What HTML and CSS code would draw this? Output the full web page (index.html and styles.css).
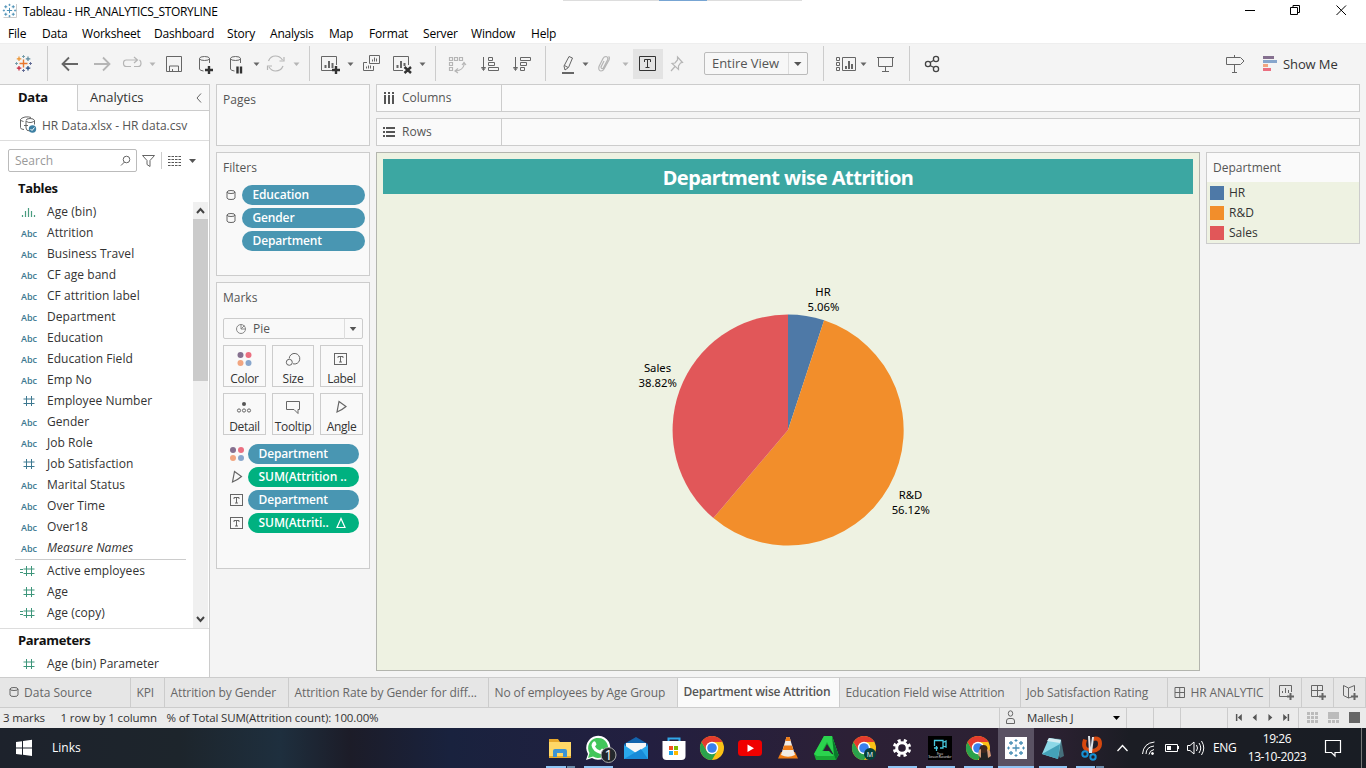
FILE: index.html
```html
<!DOCTYPE html>
<html lang="en">
<head>
<meta charset="utf-8">
<title>Tableau - HR_ANALYTICS_STORYLINE</title>
<link rel="stylesheet" href="styles.css">
</head>
<body>
<svg class="defs" width="0" height="0">
  <defs>
    <g id="plus-logo" fill="none">
      <path d="M0-4V4M-4 0H4" stroke="#e8762d" stroke-width="1.4"/>
      <path d="M-4.500-7v4.500M-6.700-4.700h4.500" stroke="#eb912c" stroke-width="1.200"/>
      <path d="M4.500-7v4.500M2.300-4.700h4.500" stroke="#59879b" stroke-width="1.200"/>
      <path d="M-4.500 2.500v4.500M-6.700 4.700h4.500" stroke="#c72037" stroke-width="1.200"/>
      <path d="M4.500 2.500v4.500M2.300 4.700h4.500" stroke="#1f457e" stroke-width="1.200"/>
      <path d="M0-8.500v3M-1.500-7h3M-8.500 0h3M-7-1.500v3" stroke="#7199a6" stroke-width=".9"/>
      <path d="M0 5.500v3M-1.500 7h3M5.500 0h3M7-1.500v3" stroke="#5b6591" stroke-width=".9"/>
    </g>
    <g id="plus-logo-blue" fill="none" stroke="#4a8fb5" stroke-width="1.300">
      <path d="M0-3.500V3.500M-3.500 0H3.500M-5-7v4M-7-5h4M5-7v4M3-5h4M-5 3v4M-7 5h4M5 3v4M3 5h4"/>
      <path d="M0-9v3M-1.500-7.500h3M-9 0h3M-7.500-1.500v3M0 6v3M-1.500 7.500h3M6 0h3M7.500-1.500v3" stroke-width="1"/>
    </g>
    <g id="chrome">
      <circle r="12" fill="#fbc116"/>
      <path d="M-10.400-6A12 12 0 0 0 0 12L5.200 3L-5.200 3Z" fill="#2ba24c"/>
      <path d="M0-6H10.400A12 12 0 0 0-10.400-6L-5.200 3Z" fill="#e33b2e"/>
      <circle r="6.200" fill="#fff"/><circle r="4.800" fill="#3a80ee"/>
    </g>
    <g id="dots">
      <circle cx="-4" cy="-4" r="3" fill="#85708f"/><circle cx="4" cy="-4" r="3" fill="#eb6f80"/>
      <circle cx="-4" cy="4" r="3" fill="#f1a580"/><circle cx="4" cy="4" r="3" fill="#88a6cc"/>
    </g>
    <g id="boxed-t" fill="none" stroke="#666">
      <rect x="-6" y="-5.500" width="12" height="11"/>
      <path d="M-2.500-1V-2.500H2.500V-1M0-2.500V3M-1.500 3H1.500"/>
    </g>
    <path id="angle" d="M-2.500-5.500L4.500-.5Q.5 3-4.500 5Z" fill="none" stroke="#666" stroke-width="1.200"/>
    <path id="db" d="M-4-3V3q0 1.500 4 1.500T4 3V-3Q4-4.500 0-4.500T-4-3Q-4-1.500 0-1.500T4-3" fill="none" stroke="#666"/>
    <path id="hash" d="M-2.500-5V5M2.500-5V5M-5.500-2H5.500M-5.500 2.500H5.500" fill="none" stroke="currentColor"/>
    <path id="caret" d="M-3-1.500H3L0 2Z"/>
  </defs>
</svg>

<div class="screen">
  <header class="titlebar">
    <svg width="22" height="22" viewBox="0 0 22 22"><path d="M3.500 17.500h13V4" fill="none" stroke="#ccc"/><use href="#plus-logo-blue" transform="translate(9.500 10.500) scale(.75)"/></svg>
    <span class="window-title">Tableau - HR_ANALYTICS_STORYLINE</span>
    <span class="top-strip"><i></i></span>
    <svg width="136" height="22" viewBox="1230 0 136 22" fill="none" stroke="#000"><path d="M1245 10.500h10M1290.500 14.500v-7h7v7zM1293 7V5.500h6.500v7H1298M1336.500 5.500l9.500 9.500M1346 5.500L1336.500 15"/></svg>
  </header>
  <nav class="menu">
    <span style="width:34px">File</span><span style="width:40px">Data</span><span style="width:72px">Worksheet</span><span style="width:73px">Dashboard</span><span style="width:43px">Story</span><span style="width:59px">Analysis</span><span style="width:40px">Map</span><span style="width:54px">Format</span><span style="width:48px">Server</span><span style="width:60px">Window</span><span>Help</span>
  </nav>

  <div class="toolbar">
    <svg width="47" height="41" viewBox="0 43 47 41"><use href="#plus-logo" x="23.500" y="63.500"/></svg><i class="sep"></i>
    <svg width="38" height="41" viewBox="48 43 38 41"><path d="M78 64H63M69 57.500L62.500 64l6.500 6.500" class="dark thick"/></svg>
    <svg width="30" height="41" viewBox="86 43 30 41"><path d="M94 64h15M103 57.500l6.500 6.500-6.500 6.500" class="light thick"/></svg>
    <svg width="30" height="41" viewBox="116 43 30 41"><path d="M131 66.500h-4.500q-3 0-3-3.300t3-3.200h10.500M134 57l3.500 3-3.500 3M139.500 60q1.500 1 1.500 3.200 0 3.300-3 3.300h-4" class="light"/></svg>
    <svg width="14" height="41" viewBox="146 43 14 41"><use href="#caret" x="152.500" y="64" fill="#b5b5b5"/></svg>
    <svg width="30" height="41" viewBox="160 43 30 41" class="dark"><path d="M166.500 56.500h15v15h-15zM169.500 71v-5h9v5M172.500 71v-2"/></svg>
    <svg width="30" height="41" viewBox="190 43 30 41" class="dark"><path d="M209.500 63v-4.500q0-2-5-2t-5 2V69q0 1.500 4 2M199.500 58.500q0 2 5 2t5-2"/><path d="M209 66v8M205 70h8" class="heavy"/></svg>
    <svg width="30" height="41" viewBox="220 43 30 41" class="dark"><path d="M240.500 63v-4.500q0-2-5-2t-5 2V69q0 1.500 4 2M230.500 58.500q0 2 5 2t5-2"/><path d="M237.500 66.500v7M241 66.500v7" class="heavy"/></svg>
    <svg width="12" height="41" viewBox="250 43 12 41"><use href="#caret" x="256.500" y="64" fill="#666"/></svg>
    <svg width="26" height="41" viewBox="262 43 26 41"><path d="M268.500 61q2-5 7-5 4.500 0 7 4M284 57v4h-4.500M283 66q-2 5-7.500 5-4 0-6.500-4M267.500 70v-4h4.500" class="light"/></svg>
    <svg width="21" height="41" viewBox="288 43 21 41"><use href="#caret" x="296.500" y="64" fill="#b5b5b5"/></svg><i class="sep"></i>
    <svg width="34" height="41" viewBox="310 43 34 41" class="dark"><path d="M336.500 65v-8.500h-15v14H332"/><path d="M325.500 68v-3M329 68v-7M332.500 68v-5" class="bars"/><path d="M336 66v8M332 70h8" class="heavy"/></svg>
    <svg width="13" height="41" viewBox="344 43 13 41"><use href="#caret" x="350.500" y="64" fill="#666"/></svg>
    <svg width="29" height="41" viewBox="357 43 29 41" class="dark"><path d="M369.500 55.500h10v8h-10zM372.500 61.500v-2M374.500 61.500v-4M376.500 61.500v-3M367 62.500h-3.500v8h10V66M366.500 68.500v-2M368.500 68.500v-3M370.500 68.500v-3"/></svg>
    <svg width="30" height="41" viewBox="386 43 30 41" class="dark"><path d="M408.500 65v-8.500h-15v14H403"/><path d="M397.500 68v-3M401 68v-7M404.500 66v-3" class="bars"/><path d="M404.500 67l6.500 6M411 67l-6.500 6" class="heavy"/></svg>
    <svg width="19" height="41" viewBox="416 43 19 41"><use href="#caret" x="422.500" y="64" fill="#666"/></svg><i class="sep"></i>
    <svg width="37" height="41" viewBox="436 43 37 41" class="light"><path d="M449.500 57.500h3v3h-3zM454.500 57.500h3v3h-3zM459.500 57.500h3v3h-3zM449.500 62.500h3v3h-3zM449.500 67.500h3v3h-3zM464 63v2q-1 5-8 6M462 65l2-2.500 2 2.500M458 68.500l-3 2.500 3 2"/></svg>
    <svg width="33" height="41" viewBox="473 43 33 41" class="dark"><path d="M483.500 57v13M481.500 67.500l2 3 2-3zM488.500 57.500h4v3h-4zM488.500 62.500h6v3h-6zM488.500 67.500h10v3h-10z"/></svg>
    <svg width="39" height="41" viewBox="506 43 39 41" class="dark"><path d="M515.500 57v13M513.500 67.500l2 3 2-3zM520.500 57.500h10v3h-10zM520.500 62.500h6v3h-6zM520.500 67.500h4v3h-4z"/></svg><i class="sep"></i>
    <svg width="34" height="41" viewBox="546 43 34 41" class="dark"><path d="M569 56.500l3.500 1.500-4 9.500-3.500 2.500-1-4zM564.500 65.500l3.500 2"/><path d="M562 73h12" class="bars"/></svg>
    <svg width="14" height="41" viewBox="580 43 14 41"><use href="#caret" x="585.500" y="64" fill="#666"/></svg>
    <svg width="25" height="41" viewBox="594 43 25 41"><path d="M604 61l-3 6q0 2 2 1.500l4.500-8.500q1-3-1.500-3.500-2 0-3 2l-4 8q-1 4 2 4.500 2 0 3-2l5-9q1-3-.5-3.500" class="light"/></svg>
    <svg width="14" height="41" viewBox="619 43 14 41"><use href="#caret" x="625.500" y="64" fill="#b5b5b5"/></svg>
    <span class="pressed"><svg width="30" height="30" viewBox="633 49 30 30" fill="none" stroke="#333"><path d="M639.500 56.500h16v14h-16zM644.500 62v-2.500h6V62M647.500 60v8M645.500 67.500h4"/></svg></span>
    <svg width="41" height="41" viewBox="663 43 41 41"><path d="M677.500 57l5 5.500-2 .5-2 3v3.500l-6.500-6 3-.5 2.500-3zM675 66.500l-4 4.500" class="light"/></svg>
    <span class="view-select"><span>Entire View</span><svg width="18" height="21" viewBox="0 0 18 21"><path d="M5 9h7.500l-3.700 4z" fill="#555"/></svg></span>
    <i class="gap15"></i><i class="sep"></i>
    <svg width="34" height="41" viewBox="824 43 34 41" class="dark"><path d="M836.500 57.500h3v3h-3zM836.500 62.500h3v3h-3zM836.500 67.500h3v3h-3zM842.500 57.500h13v13h-13z"/><path d="M846 69v-3M849 69v-8M852 69v-5" class="bars"/></svg>
    <svg width="15" height="41" viewBox="858 43 15 41"><use href="#caret" x="863.500" y="64" fill="#666"/></svg>
    <svg width="36" height="41" viewBox="873 43 36 41" class="dark"><path d="M877 57.500h17M878.500 58v8.500h14V58M885.500 66.500v5M882 71.500h7"/></svg><i class="sep"></i>
    <svg width="40" height="41" viewBox="910 43 40 41" class="dark share"><path d="M930 62.500l3.500-2M930 65.500l4 2"/><circle cx="928" cy="64" r="2.600"/><circle cx="936" cy="59" r="2.600"/><circle cx="936" cy="69" r="2.600"/></svg>
    <span class="show-me"><svg width="57" height="41" viewBox="1226 43 57 41"><path d="M1226.500 57.500h14l3.500 3.500-3.500 3.500h-14zM1234.500 55v2M1234.500 65v7.500M1232 72.500h5" class="dark"/><path d="M1263 56h11v3h-11z" fill="#85708f"/><path d="M1263 60h14v3h-14z" fill="#88a6cc"/><path d="M1263 64h5v3h-5z" fill="#f1a580"/><path d="M1263 68h8v3h-8z" fill="#eb6f80"/></svg>Show Me</span>
  </div>

  <main class="workspace">
    <aside class="data-pane">
      <div class="pane-tabs"><b>Data</b><span>Analytics<svg width="8" height="12" viewBox="0 0 8 12"><path d="M6 1.500L2 6l4 4.500" class="dark"/></svg></span></div>
      <div class="source"><svg width="22" height="20" viewBox="20 116 22 20"><path d="M31 117.500q-2-1-6-.5-4 1-4.500 2.500v8q0 2 3.500 2M20.500 119.500q0 1.500 3 2M26 121v7q0 3 4 3M26 120.500q0-2 4-2t4.500 2v4M26 121q2 2 5 1.500t3.500-2M24 125.500h4" class="dark"/><circle cx="32.500" cy="129" r="3.700" fill="#3d80a3"/><path d="M30.500 129l1.500 1.500 2.500-3" fill="none" stroke="#fff"/></svg><span>HR Data.xlsx - HR data.csv</span></div>
      <div class="search-row"><span class="search">Search<svg width="14" height="14" viewBox="0 0 14 14"><path d="M6.500 8L3 11.500" class="dark"/><circle cx="8.500" cy="5.500" r="3.300" class="dark"/></svg></span><svg width="70" height="24" viewBox="137 148 70 24"><path d="M142.500 154.500h12l-4.500 5v6l-3-2v-4z" class="dark"/><path d="M161.500 151v17" stroke="#ccc"/><path d="M168 155.500h13M168 158.500h13M168 161.500h13M168 164.500h13" stroke="#555" stroke-dasharray="2.500 1"/><path d="M189 158h7l-3.500 4z" fill="#555"/></svg></div>
      <h3>Tables</h3>
      <div class="fields">
        <ul>
          <li><svg width="16" height="12" viewBox="0 0 16 12" stroke="#4a9d80" fill="none"><path d="M1.500 11V9M4.500 11V5M7.500 11V2M10.500 11V5M13.500 11V9" stroke-width="1.200"/></svg>Age (bin)</li>
          <li><em>Abc</em>Attrition</li><li><em>Abc</em>Business Travel</li><li><em>Abc</em>CF age band</li><li><em>Abc</em>CF attrition label</li><li><em>Abc</em>Department</li><li><em>Abc</em>Education</li><li><em>Abc</em>Education Field</li><li><em>Abc</em>Emp No</li>
          <li><svg class="dim" width="16" height="12" viewBox="-8 -6 16 12"><use href="#hash"/></svg>Employee Number</li>
          <li><em>Abc</em>Gender</li><li><em>Abc</em>Job Role</li>
          <li><svg class="dim" width="16" height="12" viewBox="-8 -6 16 12"><use href="#hash"/></svg>Job Satisfaction</li>
          <li><em>Abc</em>Marital Status</li><li><em>Abc</em>Over Time</li><li><em>Abc</em>Over18</li><li class="generated"><em>Abc</em>Measure Names</li>
          <li class="first-measure"><svg class="measure" width="16" height="12" viewBox="-8 -6 16 12"><use href="#hash"/><path d="M-9-1.500h3M-9 1.500h3" stroke="currentColor"/></svg>Active employees</li>
          <li><svg class="measure" width="16" height="12" viewBox="-8 -6 16 12"><use href="#hash"/></svg>Age</li>
          <li><svg class="measure" width="16" height="12" viewBox="-8 -6 16 12"><use href="#hash"/><path d="M-9-1.500h3M-9 1.500h3" stroke="currentColor"/></svg>Age (copy)</li>
        </ul>
        <div class="scrollbar"><svg width="15" height="17" viewBox="0 0 15 17"><path d="M4 11l3.500-4 3.500 4" fill="none" stroke="#444" stroke-width="2"/></svg><i></i><svg class="down" width="15" height="17" viewBox="0 0 15 17"><path d="M4 6l3.500 4L11 6" fill="none" stroke="#444" stroke-width="2"/></svg></div>
      </div>
      <div class="parameters"><h3>Parameters</h3><ul><li><svg class="measure" width="16" height="12" viewBox="-8 -6 16 12"><use href="#hash"/></svg>Age (bin) Parameter</li></ul></div>
    </aside>

    <section class="cards">
      <div class="card pages"><h4>Pages</h4></div>
      <div class="card filters"><h4>Filters</h4>
        <div class="pill-row"><svg width="18" height="20" viewBox="-7 -10 18 20"><use href="#db"/></svg><span class="pill">Education</span></div>
        <div class="pill-row"><svg width="18" height="20" viewBox="-7 -10 18 20"><use href="#db"/></svg><span class="pill">Gender</span></div>
        <div class="pill-row"><svg width="18" height="20" viewBox="-7 -10 18 20"></svg><span class="pill">Department</span></div>
      </div>
      <div class="card marks"><h4>Marks</h4>
        <div class="mark-type"><svg width="14" height="14" viewBox="-7 -7 14 14"><circle r="4.500" fill="none" stroke="#888"/><path d="M0-5V0H5M0 0L3.500-3.500" fill="none" stroke="#888"/></svg><span>Pie</span><svg class="drop" width="18" height="20" viewBox="0 0 18 20"><path d="M5 8h7l-3.500 4z" fill="#555"/></svg></div>
        <div class="mark-buttons">
          <span><svg width="24" height="20" viewBox="-11.500 -10 24 20"><use href="#dots"/></svg>Color</span>
          <span><svg width="24" height="20" viewBox="-12 -10 24 20" class="dark"><path d="M-3.800-.5A5.300 5.300 0 1 1 0 4.800"/><circle cx="-3.700" cy="3.300" r="3"/></svg>Size</span>
          <span><svg width="24" height="20" viewBox="-10.500 -10 24 20"><use href="#boxed-t"/></svg>Label</span>
          <span><svg width="24" height="20" viewBox="-11 -10 24 20"><circle cy="-3" r="2" fill="#555"/><g class="dark"><circle cx="-5" cy="3.500" r="1.600"/><circle cy="3.500" r="1.600"/><circle cx="5" cy="3.500" r="1.600"/></g></svg>Detail</span>
          <span><svg width="24" height="20" viewBox="-12 -10 24 20"><path d="M-6.500-5.500h13v8H5v4l-4-4h-7.500z" class="dark"/></svg>Tooltip</span>
          <span><svg width="24" height="20" viewBox="-11.500 -10 24 20"><use href="#angle"/></svg>Angle</span>
        </div>
        <div class="pill-row mark"><svg width="24" height="20" viewBox="-13 -10 24 20"><use href="#dots"/></svg><span class="pill">Department</span></div>
        <div class="pill-row mark"><svg width="24" height="20" viewBox="-13 -10 24 20"><use href="#angle"/></svg><span class="pill green">SUM(Attrition ..</span></div>
        <div class="pill-row mark"><svg width="24" height="20" viewBox="-12.500 -10 24 20"><use href="#boxed-t"/></svg><span class="pill">Department</span></div>
        <div class="pill-row mark"><svg width="24" height="20" viewBox="-12.500 -10 24 20"><use href="#boxed-t"/></svg><span class="pill green">SUM(Attriti..<svg width="12" height="12" viewBox="0 0 12 12"><path d="M6 1.500L2 10.500h8z" fill="none" stroke="#fff" stroke-width="1.200"/></svg></span></div>
      </div>
    </section>

    <section class="canvas">
      <div class="shelf"><span><svg width="12" height="12" viewBox="0 0 12 12"><path d="M1 0h2v2H1zM5 0h2v2H5zM9 0h2v2H9zM1 3h2v9H1zM5 3h2v9H5zM9 3h2v9H9z" fill="#555"/></svg>Columns</span></div>
      <div class="shelf"><span><svg width="12" height="12" viewBox="0 0 12 12"><path d="M0 1h2v2H0zM0 5h2v2H0zM0 9h2v2H0zM3 1h9v2H3zM3 5h9v2H3zM3 9h9v2H3z" fill="#555"/></svg>Rows</span></div>
      <div class="view-row">
        <div class="view">
          <h1>Department wise Attrition</h1>
          <svg class="pie" width="810" height="475" viewBox="383 194 810 475">
            <path d="M788 430V314.500A115.500 115.500 0 0 1 824.100 320.300Z" fill="#4e79a7"/>
            <path d="M788 430L824.100 320.300A115.500 115.500 0 1 1 713.400 518.100Z" fill="#f28e2b"/>
            <path d="M788 430L713.400 518.100A115.500 115.500 0 0 1 788 314.500Z" fill="#e15759"/>
            <g text-anchor="middle"><text x="823" y="296">HR</text><text x="823.500" y="311">5.06%</text><text x="657.500" y="372">Sales</text><text x="657.700" y="387">38.82%</text><text x="910.500" y="499">R&amp;D</text><text x="910.800" y="514">56.12%</text></g>
          </svg>
        </div>
        <div class="legend"><h4>Department</h4><div class="keys"><span><i class="hr"></i>HR</span><span><i class="rd"></i>R&amp;D</span><span><i class="sales"></i>Sales</span></div></div>
      </div>
    </section>
  </main>

  <nav class="sheets">
    <span class="source-tab" style="width:131px"><svg width="10" height="14" viewBox="-5 -6 10 14"><use href="#db"/></svg>Data Source</span><span style="width:34px">KPI</span><span style="width:124px">Attrition by Gender</span><span style="width:200px">Attrition Rate by Gender for diff...</span><span style="width:189px">No of employees by Age Group</span><b style="width:162px">Department wise Attrition</b><span style="width:181px">Education Field wise Attrition</span><span style="width:147px">Job Satisfaction Rating</span><span class="dash-tab" style="width:102px"><svg width="12" height="12" viewBox="0 0 12 12"><path d="M1 .5h9.500v10H1zM5.700 0v11M1 5.500h10" fill="none" stroke="#666"/></svg>HR ANALYTIC</span>
    <span class="new"><svg width="32" height="30" viewBox="1270 678 32 30" class="dark"><path d="M1291.500 692v-6.500h-12v11h8M1282.500 693v-2M1285.500 693v-5M1288.500 693v-3"/><path d="M1290.500 693v7M1287 696.500h7" stroke-width="2"/></svg></span>
    <span class="new"><svg width="32" height="30" viewBox="1302 678 32 30" class="dark"><path d="M1322.500 691v-5.500h-11v11h8M1317.500 686v10M1311 690.500h11"/><path d="M1322.500 693v7M1319 696.500h7" stroke-width="2"/></svg></span>
    <span class="new"><svg width="32" height="30" viewBox="1334 678 32 30" class="dark"><path d="M1354.500 691v-5.500l-6 2.500-5-2.500v10l5 2.500 3-1M1348.500 688v10"/><path d="M1354.500 693v7M1351 696.500h7" stroke-width="2"/></svg></span>
  </nav>
  <div class="status">
    <span style="width:57.500px">3 marks</span><span style="width:106px">1 row by 1 column</span><span>% of Total SUM(Attrition count): 100.00%</span>
    <div class="user"><svg width="18" height="20" viewBox="0 0 18 20"><path d="M4.500 15.500v-2.500q0-2.500 2.500-2.500h3q2.500 0 2.500 2.500v2.500z" class="dark"/><ellipse cx="8.500" cy="5.500" rx="2.200" ry="2.700" class="dark"/></svg>Mallesh J<svg class="drop" width="10" height="6" viewBox="0 0 10 6"><path d="M2 1h7L5.500 5z"/></svg></div>
    <i></i><i></i><i class="wide"></i>
    <svg class="pager" width="71" height="20" viewBox="1228 708 71 20" fill="#555"><path d="M1236 714h1.500v7h-1.500zM1242 714v7l-4-3.500zM1257 714v7l-4-3.500zM1269 714v7l4-3.500zM1284 714v7l4-3.500zM1288.500 714h1.500v7h-1.500z"/></svg>
    <svg width="67" height="20" viewBox="1299 708 67 20" fill="#bbb"><path d="M1307 712h3v3h-3zM1311 712h3v3h-3zM1315 712h3v3h-3zM1307 716h3v3h-3zM1311 716h3v3h-3zM1315 716h3v3h-3zM1307 720h3v3h-3zM1311 720h3v3h-3zM1315 720h3v3h-3zM1328 712h11v7h-11zM1328 720h3v3h-3zM1332 720h3v3h-3zM1336 720h3v3h-3z"/><path d="M1349 712h11v11h-11z" fill="#666"/></svg>
  </div>

  <footer class="taskbar">
    <svg width="52" height="40" viewBox="0 728 52 40" fill="#fff"><path d="M16 742l6-.8v6.300h-6zM23 741l9-1.200v7.700h-9zM16 748.500h6v6.300l-6-.8zM23 748.500h9v7.500l-9-1.200z"/></svg>
    <span class="links">Links</span>
    <svg width="38" height="40" viewBox="-19 0 38 40"><path d="M-11 11h9l2 3H11v16h-22z" fill="#e8a92c"/><path d="M-11 14H11v14h-22z" fill="#ffd867"/><path d="M-7 29v-6q0-2 2-2H5q2 0 2 2v6H3v-4h-6v4z" fill="#3d93d3"/><path d="M-14 38H6v2h-20z" fill="#90c5f5"/><path d="M7 38h8v2H7z" fill="#6b8baa"/></svg>
    <svg width="38" height="40" viewBox="-19 0 38 40"><path d="M-12 32l2-6A12 12 0 1 1-6 30z" fill="#fff"/><path d="M-10 30l1.500-5A10 10 0 1 1-5 28.500z" fill="#42c65a"/><path d="M-5 14q2-2 3 1l.5 1.500-1.500 2q1.500 3 5 4l2-2 3.500 2q-1 4-5 3.500-8-2.500-9-8.500 0-2 1.500-3.500" fill="#fff"/><circle cx="10.500" cy="27" r="7.500" fill="#24282c" stroke="#aaa"/><text x="10.500" y="32" text-anchor="middle" class="badge">1</text><path d="M-14 38h29v2h-29z" fill="#90c5f5"/></svg>
    <svg width="38" height="40" viewBox="-19 0 38 40"><path d="M-12 16L0 9l12 7v15h-24z" fill="#1364ad"/><path d="M-10 15h20v10h-20z" fill="#f7f7f7"/><path d="M-12 17L0 25l12-8v14h-24z" fill="#2aa8ec"/><path d="M-12 31L5 21l7 10z" fill="#188bd8"/></svg>
    <svg width="38" height="40" viewBox="-19 0 38 40"><path d="M-5.500 16V10.500h11V16" fill="none" stroke="#31a7e8" stroke-width="2"/><path d="M-11.500 13h23v15q0 4-4 4h-15q-4 0-4-4z" fill="#fff"/><path d="M-5 18h4v4h-4z" fill="#f25022"/><path d="M0 18h4v4H0z" fill="#7fba00"/><path d="M-5 23h4v4h-4z" fill="#1aa7ee"/><path d="M0 23h4v4H0z" fill="#ffb900"/></svg>
    <svg width="38" height="40" viewBox="-19 0 38 40"><use href="#chrome" y="20"/></svg>
    <svg width="38" height="40" viewBox="-19 0 38 40"><rect x="-12" y="12" width="24" height="16" rx="3.500" fill="#f00000"/><path d="M-2.500 16.500L4 20.200l-6.500 3.800z" fill="#fff"/></svg>
    <svg width="38" height="40" viewBox="-19 0 38 40"><path d="M-7 24H7l3 6.500h-20z" fill="#f07c11"/><path d="M-1.500 9h3L7 27q-7 3.500-14 0z" fill="#f1ece4"/><path d="M-1.500 9h3l1.300 4h-5.600zM-4 17.500h8l1.300 4.500H-5.300z" fill="#ee7c17"/></svg>
    <svg width="38" height="40" viewBox="-19 0 38 40"><path d="M-2 8H6L12.500 27 10 32H-10L-12 26z" fill="#19a935"/><path d="M1 16L-4.500 26H7.500z" fill="#2c2036"/><path d="M-2 8H6L12.500 27 10 31 1 14-4 23H3L8 28H-9L-12 26z" fill="#2bd34e"/><path d="M6 8l6.500 19L10 32 8 27z" fill="#087b2b"/></svg>
    <svg width="38" height="40" viewBox="-19 0 38 40"><use href="#chrome" y="20"/><circle cx="6" cy="26" r="6" fill="#063f3a"/><text x="6" y="28.700" text-anchor="middle" class="initial">M</text></svg>
    <svg width="38" height="40" viewBox="-19 0 38 40"><circle cy="20" r="5.300" fill="none" stroke="#fff" stroke-width="3"/><circle cy="20" r="7.700" fill="none" stroke="#fff" stroke-width="3" stroke-dasharray="3.050 3" transform="rotate(11 0 20)"/><path d="M-14 38h29v2h-29z" fill="#90c5f5"/></svg>
    <svg width="38" height="40" viewBox="-19 0 38 40"><path d="M-12 8h24v24h-24z" fill="#000"/><path d="M-5.500 16v-3.500H3V20H0M-5.500 15v3M-6 20h4M-3.500 18v5M3 14.500l3-1.500v6l-3-1" fill="none" stroke="#47c9df" stroke-width="1.300"/><text y="26.500" text-anchor="middle" class="micro">Free</text><text y="30" text-anchor="middle" class="micro">Screen Recorder</text><path d="M-14 38h29v2h-29z" fill="#90c5f5"/></svg>
    <svg width="38" height="40" viewBox="-19 0 38 40"><use href="#chrome" y="20"/><path d="M1 32l1-7 4-5 5 4 1 8z" fill="#222"/><circle cx="5.500" cy="21" r="4" fill="#40291f"/><path d="M1 22l2-1v9l-3-3zM9 21l3 2 1 5-3 2z" fill="#d59b78"/><path d="M-14 38h29v2h-29z" fill="#90c5f5"/></svg>
    <svg class="running" width="36" height="40" viewBox="-18 0 36 40"><path d="M-11 9h22v22h-22z" fill="#fff"/><use href="#plus-logo-blue" y="20"/><path d="M-18 38h36v2h-36z" fill="#90c5f5"/></svg>
    <svg width="38" height="40" viewBox="-19 0 38 40"><path d="M-4 10L8 11 11 28l-4 2z" fill="#456f7c"/><path d="M-4 10L8 12 5 31l-16-5z" fill="#8dd8e7"/><path d="M-4 10L8 12 7 15l-13-2z" fill="#d5edf2"/><path d="M-11 26L5 31l2-15z" fill="#44a1b8"/><path d="M-14 38h28v2h-28z" fill="#90c5f5"/></svg>
    <svg width="38" height="40" viewBox="-19 0 38 40"><path d="M-6 11.500Q-9 21-2 22M2 11q7-2 7 5 0 6-8 7" fill="none" stroke="#d6480f" stroke-width="4"/><path d="M-2 8l1 17M2 9l-2 16" stroke="#e0e4e8" stroke-width="2"/><circle cx="-6" cy="26" r="2.700" fill="none" stroke="#1691d5" stroke-width="2"/><circle cx="2" cy="29" r="2.700" fill="none" stroke="#1691d5" stroke-width="2"/><path d="M-15 38H4v2h-19z" fill="#90c5f5"/><path d="M5 38h8v2H5z" fill="#6b8baa"/></svg>
    <svg width="102" height="40" viewBox="1110 728 102 40" fill="none" stroke="#fff"><path d="M1117.500 751l5-5.500 5 5.500" stroke-width="1.300"/><path d="M1142.500 754q1-11 12-12M1146 754q0-7 8-8M1149 754.500q.5-4 5-5"/><circle cx="1152.500" cy="753.500" r="1" fill="#fff"/><path d="M1165.500 744.500h12v7h-12zM1178.500 746v3"/><path d="M1167 746h4v4h-4z" fill="#fff" stroke="none"/><path d="M1187.500 745.500h2.500l4-3.500v12l-4-3.500h-2.500zM1196.500 745q2 3 0 6M1199 743q3.500 5 0 10M1201.500 741q4.500 7 0 14"/></svg>
    <span class="lang">ENG</span>
    <div class="clock"><span>19:26</span><span>13-10-2023</span></div>
    <svg width="56" height="40" viewBox="1310 728 56 40" fill="none" stroke="#fff"><path d="M1325.500 740.500h15v12h-5.500v3.500l-3.500-3.500h-6z" stroke-width="1.200"/><path d="M1361.500 728v40" stroke="#777"/></svg>
  </footer>
</div>
</body>
</html>
```
FILE: styles.css
```css
* { box-sizing: border-box; }
body { margin: 0; font: 12px/16px "Open Sans", "Noto Sans", sans-serif; color: #333; }
h1, h3, h4, ul { margin: 0; padding: 0; font-weight: normal; list-style: none; }
em { font-style: normal; }
svg { display: block; flex: none; }
.defs { position: absolute; }
.dark { fill: none; stroke: #666; }
.light { fill: none; stroke: #b5b5b5; stroke-width: 1.2; }
.thick { stroke-width: 1.8; }
.bars { stroke-width: 2; }
.heavy { stroke: #333; stroke-width: 2.4; }
.share { stroke: #444; stroke-width: 1.3; }
.screen { width: 1366px; height: 768px; display: flex; flex-direction: column; overflow: hidden; background: #f4f4f4; white-space: nowrap; }

.titlebar { height: 22px; display: flex; background: #fff; color: #000; line-height: 23px; }
.window-title { margin-left: 1px; width: 540px; letter-spacing: -.31px; }
.top-strip { width: 239px; height: 1px; margin-right: auto; background: #ddd; padding-left: 96px; }
.top-strip i { display: block; width: 48px; height: 1px; background: #77a5d3; }
.menu { height: 21px; display: flex; padding-left: 8px; background: #fff; color: #000; line-height: 24px; letter-spacing: -.2px; }

.toolbar { height: 41px; display: flex; align-items: center; box-shadow: inset 0 1px #eee; }
.sep { width: 1px; height: 35px; background: #ccc; flex: none; }
.pressed { background: #e3e3e3; }
.view-select { width: 104px; height: 23px; display: flex; border: 1px solid #bbb; border-radius: 2px; background: #f7f7f7; color: #555; font-size: 13px; line-height: 20px; letter-spacing: -.05px; }
.view-select span { width: 85px; padding-left: 7px; border-right: 1px solid #ddd; }
.gap15 { width: 15px; }
.show-me { margin-left: auto; width: 140px; display: flex; align-items: center; font-size: 13px; letter-spacing: -.1px; }

.workspace { height: 593px; display: flex; }
.data-pane { width: 210px; display: flex; flex-direction: column; background: #fff; border-right: 1px solid #ccc; border-top: 1px solid #ccc; }
.pane-tabs { height: 26px; display: flex; font-size: 13px; line-height: 25px; }
.pane-tabs b { width: 77px; padding-left: 18px; color: #111; letter-spacing: -.3px; }
.pane-tabs span { flex: 1; display: flex; align-items: center; justify-content: space-between; padding: 0 6px 0 12px; background: #f9f9f9; border: solid #ccc; border-width: 0 0 1px 1px; }
.source { height: 30px; display: flex; align-items: center; padding-left: 20px; border-bottom: 1px solid #ddd; color: #555; }
.search-row { display: flex; height: 36px; padding: 8px 0 0 8px; }
.search { width: 129px; height: 23px; display: flex; align-items: center; justify-content: space-between; padding: 0 4px 0 6px; border: 1px solid #bbb; border-radius: 2px; color: #999; }
.data-pane h3 { font-size: 13px; font-weight: bold; color: #111; padding-left: 18px; line-height: 23px; letter-spacing: -.35px; }
.fields { height: 426px; margin-top: 2px; display: flex; justify-content: space-between; }
.fields ul { width: 186px; margin-top: -1px; }
.data-pane li { height: 21px; display: flex; align-items: center; padding-left: 21px; letter-spacing: .05px; }
li svg, li em { width: 16px; margin-right: 10px; }
li em { font-size: 9px; font-weight: 600; color: #3c7890; letter-spacing: 0; font-style: normal; padding-top: 2px; }
.dim { color: #3c7890; }
.measure { color: #3c957a; overflow: visible; }
.generated { font-style: italic; }
.data-pane .first-measure { height: 23px; margin-top: 1px; height: 22px; margin-left: 15px; padding-left: 6px; border-top: 1px solid #ccc; }
.scrollbar { width: 15px; margin-right: 1px; background: #f0f0f0; display: flex; flex-direction: column; }
.scrollbar i { height: 162px; background: #cbcbcb; }
.down { margin-top: auto; }
.parameters { border-top: 1px solid #ddd; }
.parameters ul { margin-top: 1px; }

.cards { width: 154px; margin-left: 6px; display: flex; flex-direction: column; gap: 6px; }
.card { border: 1px solid #ccc; background: #f9f9f9; }
h4 { font-size: 12px; color: #555; padding: 7px 6px; height: 32px; }
.pages { height: 62px; }
.filters { height: 124px; }
.marks { height: 287px; }
.pill-row { display: flex; height: 20px; margin-bottom: 3px; padding-left: 7px; }
.pill { width: 123px; height: 20px; padding-left: 10.5px; border-radius: 10px; background: #4996b2; color: #fff; line-height: 20px; font-weight: 600; display: flex; align-items: center; letter-spacing: -.15px; }
.pill.green { background: #00b180; letter-spacing: -.05px; }
.mark .pill { width: 111px; }
.pill svg { margin-left: 6px; }
.mark-type { width: 140px; height: 21px; margin: 3px 6px 6px; display: flex; align-items: center; border: 1px solid #ccc; border-radius: 2px; color: #555; padding-left: 10px; gap: 5px; }
.mark-type .drop { margin-left: auto; border-left: 1px solid #ddd; }
.mark-buttons { display: grid; grid-template-columns: 43px 42px 43px; gap: 6px; margin: 0 6px 9px; }
.mark-buttons span { height: 42px; border: 1px solid #ccc; display: flex; flex-direction: column; align-items: center; padding-top: 3px; line-height: 19px; letter-spacing: -.3px; }

.canvas { width: 984px; margin-left: 6px; display: flex; flex-direction: column; gap: 6px; }
.shelf { height: 28px; border: 1px solid #ccc; background: #fafafa; display: flex; color: #555; }
.shelf span { width: 125px; border-right: 1px solid #ccc; display: flex; align-items: center; padding-left: 6px; gap: 7px; }
.view-row { display: flex; justify-content: space-between; align-items: flex-start; }
.view { width: 824px; height: 519px; padding: 6px; border: 1px solid #b3b5ae; background: #eef2e2; }
h1 { height: 35px; background: #3ca7a2; color: #fff; text-align: center; font: bold 20px/37px "Noto Sans", sans-serif; letter-spacing: -.52px; }
.pie text { font: 11.3px "Noto Sans", sans-serif; fill: #000; }
.legend { width: 154px; height: 92px; border: 1px solid #ccc; background: #fafafa; }
.legend h4 { height: 29px; }
.keys { height: 61px; background: #eef2e2; padding: 1px 0 0 3px; }
.keys span { display: flex; height: 20px; align-items: center; gap: 5px; }
.keys i { width: 14px; height: 14px; margin-top: -1px; }
.hr { background: #4e79a7; }
.rd { background: #f28e2b; }
.sales { background: #e15759; }

.sheets { height: 31px; display: flex; border: solid #ccc; border-width: 1px 0; background: #e6e6e6; color: #666; line-height: 29px; letter-spacing: -.1px; }
.sheets > * { padding-left: 5.5px; border-right: 1px solid #ccc; overflow: hidden; flex: none; }
.sheets b { background: #fafafa; color: #555; font-weight: 600; letter-spacing: -.2px; line-height: 28px; }
.source-tab, .dash-tab { display: flex; align-items: center; gap: 5px; }
.sheets .source-tab { padding-left: 9px; letter-spacing: 0; }
.sheets .new { width: 32px; padding: 0; }
.status { height: 20px; display: flex; background: #ebebeb; line-height: 20px; padding-left: 3px; font-size: 11.5px; letter-spacing: -.12px; }
.user { width: 128px; margin-left: auto; display: flex; border: solid #ccc; border-width: 0 1px; gap: 7px; padding-left: 2px; }
.user .drop { margin: 7px 5px 0 auto; }
.status i { width: 27px; border-right: 1px solid #ccc; }
.status .wide { width: 47px; }
.pager { border-right: 1px solid #ccc; }

.taskbar { height: 40px; display: flex; color: #fff; background: linear-gradient(90deg, #1d222c 0, #1d252c 180px, #1e2f3e 280px, #1c1c28 350px, #19223e 450px, #231f40 650px, #2c2036 850px, #2c2132 1050px, #1b1d24 1130px, #191d24); line-height: 40px; }
.links { width: 489px; }
.badge { font: 14px "Open Sans", sans-serif; fill: #fff; }
.initial { font: 7px "Open Sans", sans-serif; fill: #fff; }
.micro { font: 3px "Open Sans", sans-serif; fill: #fff; }
.running { background: #5a5263; margin-left: 1px; }
.lang { width: 32px; padding-left: 1px; letter-spacing: -.3px; }
.clock { width: 66px; display: flex; flex-direction: column; align-items: center; line-height: 18px; padding-top: 2px; letter-spacing: -.4px; }
```
